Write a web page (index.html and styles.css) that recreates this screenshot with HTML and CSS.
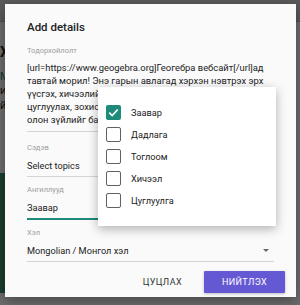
FILE: index.html
```html
<!DOCTYPE html>
<html lang="en">
<head>
    <meta charset="UTF-8">
    <title>Add details</title>
    <link rel="stylesheet" href="styles.css">
</head>
<body>
    <div class="page">
        <div class="page-bar"></div>
        <div class="page-text">X:</div>
        <div class="page-link">М</div>
        <div class="page-text small">и<br>й</div>
        <div class="page-green"></div>
    </div>

    <div class="overlay"></div>

    <div class="dialog">
        <h2>Add details</h2>

        <div class="field field-desc">
            <div class="field-label">Тодорхойлолт</div>
            <div class="field-value text">
                <div>[url=https://www.geogebra.org]Геогебра вебсайт[/url]ад</div>
                <div>тавтай морил! Энэ гарын авлагад хэрхэн нэвтрэх эрх</div>
                <div>үүсгэх, хичээлийн материал хайх, материал</div>
                <div>цуглуулах, зохиох болон хуваалцах гэх мэт</div>
                <div>олон зүйлийг багтаасан болно.</div>
            </div>
        </div>

        <div class="field">
            <div class="field-label">Сэдэв</div>
            <div class="field-value">Select topics</div>
        </div>

        <div class="field">
            <div class="field-label">Ангиллууд</div>
            <div class="field-value focused">Заавар</div>
        </div>

        <div class="field">
            <div class="field-label">Хэл</div>
            <div class="field-value select">
                <span>Mongolian / Монгол хэл</span>
                <span class="arrow"></span>
            </div>
        </div>

        <div class="actions">
            <button class="btn btn-flat">Цуцлах</button>
            <button class="btn btn-primary">Нийтлэх</button>
        </div>
    </div>

    <div class="menu">
        <div class="menu-item"><span class="check checked"><svg viewBox="0 0 16 16" width="15" height="15"><polyline points="3.5,8.2 6.6,11.2 12.5,4.8" fill="none" stroke="#fff" stroke-width="1.8"/></svg></span>Заавар</div>
        <div class="menu-item"><span class="check"></span>Дадлага</div>
        <div class="menu-item"><span class="check"></span>Тоглоом</div>
        <div class="menu-item"><span class="check"></span>Хичээл</div>
        <div class="menu-item"><span class="check"></span>Цуглуулга</div>
    </div>
</body>
</html>
```

FILE: styles.css
```css
* {
    box-sizing: border-box;
    margin: 0;
    padding: 0;
}
body {
    font-family: Roboto, 'Noto Sans', sans-serif;
    background: #f2f2f2;
    width: 300px;
    height: 305px;
    overflow: hidden;
    position: relative;
    color: #212121;
}

/* page behind the dialog */
.page {
    height: 305px;
    font-size: 14px;
}
.page-bar {
    height: 22px;
    background: #c8c8c8;
    border-bottom: 1px solid #b0b0b0;
}
.page-text {
    margin-top: 22px;
    font-weight: bold;
    color: #222;
}
.page-text.small {
    margin-top: 0;
    font-weight: normal;
    font-size: 11px;
    line-height: 15px;
}
.page-link {
    margin-top: 10px;
    color: #1b7a5a;
    font-size: 11px;
}
.page-green {
    margin-top: 60px;
    width: 14px;
    height: 120px;
    background: #3d8a64;
}
.overlay {
    position: absolute;
    inset: 0;
    background: rgba(0, 0, 0, 0.55);
}

/* dialog */
.dialog {
    position: absolute;
    left: 5px;
    top: 4px;
    width: 291px;
    height: 293px;
    background: #fafafa;
    padding: 13px 22px 0 22px;
    box-shadow: 0 4px 12px rgba(0, 0, 0, 0.35);
}
h2 {
    font-size: 11.5px;
    line-height: 20px;
    font-weight: 500;
    color: #222;
}
.field {
    margin-top: 8px;
}
.field-desc {
    margin-top: 9px;
}
.field-desc + .field {
    margin-top: 11px;
}
.field-label {
    font-size: 7.5px;
    line-height: 10px;
    color: #a0a0a0;
}
.field-value {
    font-size: 9.2px;
    line-height: 13px;
    margin-top: 6px;
    padding-bottom: 4px;
    border-bottom: 1px solid #d4d4d4;
    color: #222;
}
.field-value.text {
    font-size: 9.4px;
    margin-top: 5px;
    padding-bottom: 5px;
    white-space: nowrap;
    overflow: hidden;
}
.field-value.focused {
    border-bottom: 2px solid #1e8a7a;
    padding-bottom: 4px;
}
.field-value.select {
    display: flex;
    justify-content: space-between;
    align-items: center;
}
.arrow {
    width: 0;
    height: 0;
    margin-right: 5px;
    border-left: 3.5px solid transparent;
    border-right: 3.5px solid transparent;
    border-top: 3.5px solid #666;
}
.actions {
    display: flex;
    justify-content: flex-end;
    align-items: center;
    gap: 14px;
    margin-top: 9px;
    margin-right: -11px;
}
.btn {
    font-family: Roboto, sans-serif;
    font-size: 9px;
    text-transform: uppercase;
    letter-spacing: 0.4px;
    border: none;
    background: none;
    height: 22px;
    padding: 0 8px;
}
.btn-flat {
    color: #333;
}
.btn-primary {
    width: 81px;
    background: #6558d3;
    color: #fff;
    border-radius: 1px;
    box-shadow: 0 1px 3px rgba(0, 0, 0, 0.25);
}

/* dropdown menu */
.menu {
    position: absolute;
    left: 98px;
    top: 87px;
    width: 178px;
    height: 139px;
    background: #fff;
    padding: 14px 0;
    box-shadow: 0 3px 10px rgba(0, 0, 0, 0.3);
}
.menu-item {
    display: flex;
    align-items: center;
    height: 22px;
    padding-left: 8px;
    gap: 10px;
    font-size: 9.2px;
    color: #222;
}
.check {
    width: 15px;
    height: 15px;
    border: 1.6px solid #616161;
    border-radius: 2px;
    display: flex;
}
.check.checked {
    border: none;
    background: #1e8a7a;
}
```
